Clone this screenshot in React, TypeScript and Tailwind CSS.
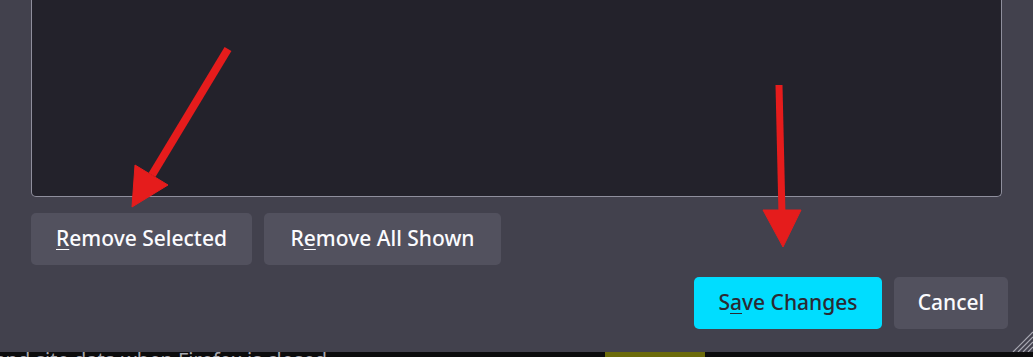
import React from "react";

const font = { fontFamily: '"Noto Sans", "Open Sans", sans-serif' };

function Btn({ w, children, primary }: { w: string; children: React.ReactNode; primary?: boolean }) {
  return (
    <div
      className={`${w} h-[52px] rounded-[5px] flex items-center justify-center text-[21px] font-medium whitespace-nowrap ${
        primary ? "bg-[#00ddff] text-[#2b2a33]" : "bg-[#52515e] text-[#fbfbfe]"
      }`}
    >
      {children}
    </div>
  );
}

export default function App() {
  return (
    <div className="relative w-[1033px] h-[357px] overflow-hidden bg-[#0c0c0d]" style={font}>
      <div className="relative h-[352px] bg-[#42414d] flex flex-col">
        <div className="ml-[31px] w-[971px] h-[197px] bg-[#23222b] border border-t-0 border-[#8f8f9d] rounded-b-[5px]" />
        <div className="flex gap-[12px] ml-[31px] mt-[16px]">
          <Btn w="w-[221px]">
            <span><span className="underline underline-offset-[3px] decoration-1">R</span>emove Selected</span>
          </Btn>
          <Btn w="w-[237px]">
            <span>R<span className="underline underline-offset-[3px] decoration-1">e</span>move All Shown</span>
          </Btn>
        </div>
        <div className="flex justify-end gap-[12px] pr-[25px] mt-[12px]">
          <Btn w="w-[188px]" primary>
            <span>S<span className="underline underline-offset-[3px] decoration-1">a</span>ve Changes</span>
          </Btn>
          <Btn w="w-[114px]">Cancel</Btn>
        </div>
        <svg className="absolute right-0 bottom-0" width="22" height="22" viewBox="0 0 22 22">
          <g stroke="#a9a9b3" strokeWidth="1.2">
            <line x1="22" y1="2" x2="2" y2="22" />
            <line x1="22" y1="7" x2="7" y2="22" />
            <line x1="22" y1="12" x2="12" y2="22" />
            <line x1="22" y1="17" x2="17" y2="22" />
          </g>
        </svg>
      </div>
      <div className="relative h-[5px] flex">
        <div className="w-[327px] h-[5px] overflow-hidden flex justify-end">
          <div className="whitespace-nowrap text-[20px] leading-[20px] -mt-[2px] text-[#a8a8b0]">
            Delete cookies and site data when Firefox is closed
          </div>
        </div>
        <div className="absolute left-[605px] top-0 w-[100px] h-[5px] bg-[#6b6a0a]" />
      </div>
      <svg className="absolute left-0 top-0 pointer-events-none" width="1033" height="357" viewBox="0 0 1033 357">
        <g fill="#e51c1c" stroke="#e51c1c">
          <line x1="228" y1="49" x2="152" y2="175" strokeWidth="8" />
          <polygon points="132,207 135,165 168,185" strokeWidth="1" />
          <line x1="779" y1="85" x2="782" y2="215" strokeWidth="7" />
          <polygon points="763,210 801,210 783,247" strokeWidth="1" />
        </g>
      </svg>
    </div>
  );
}
